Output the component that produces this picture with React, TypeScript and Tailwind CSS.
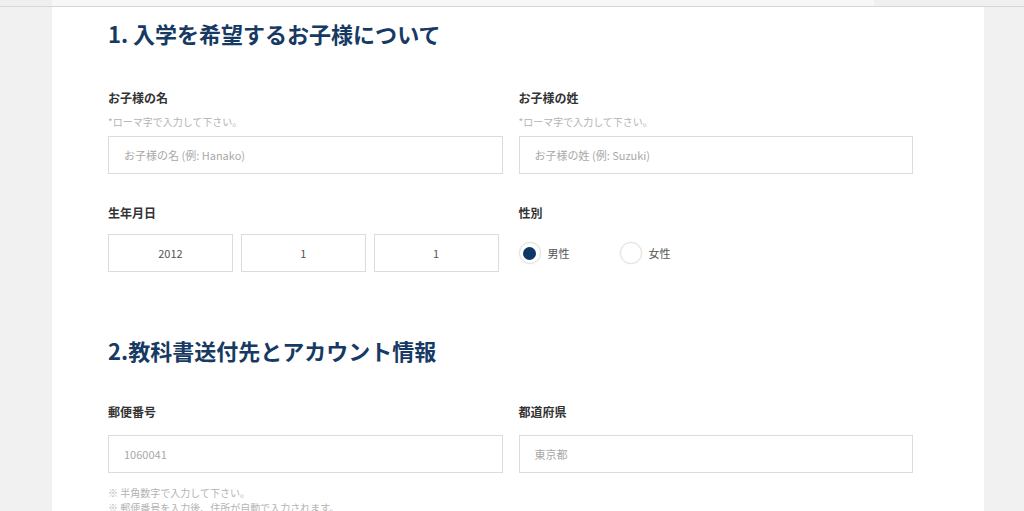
import React from 'react';

const font = { fontFamily: '"Noto Sans CJK JP", "Noto Sans", sans-serif' };

function TextField({ placeholder }: { placeholder: string }) {
  return (
    <div className="h-[38px] border border-[#dcdcdc] bg-white flex items-center px-[15px] text-[11px] text-[#a8a8a8]">
      {placeholder}
    </div>
  );
}

function Radio({ label, checked }: { label: string; checked?: boolean }) {
  return (
    <div className="flex items-center gap-[7px]">
      <span className="w-[22px] h-[22px] rounded-full border border-[#e2e2e2] bg-white shadow-[0_0_2px_rgba(0,0,0,0.08)] flex items-center justify-center">
        {checked && <span className="w-[13px] h-[13px] rounded-full bg-[#0e3767]" />}
      </span>
      <span className="text-[11px] text-[#555]">{label}</span>
    </div>
  );
}

export default function App() {
  return (
    <div className="w-[1024px] h-[511px] overflow-hidden bg-[#f1f1f1] flex flex-col" style={font}>
      <div className="h-[7px] shrink-0 bg-[#f7f7f7] border-b border-[#d6d6d6] flex">
        <div className="w-[52px] bg-[#efefef]" />
        <div className="flex-1" />
        <div className="w-[150px] bg-[#f0f0f0]" />
      </div>
      <div className="flex flex-1">
        <div className="ml-[52px] w-[932px] bg-white pl-[56px] pt-[11px]">
          <div className="w-[805px]">
            <h2 className="text-[22px] leading-[30px] font-bold text-[#163a63]">1. 入学を希望するお子様について</h2>

            <div className="grid grid-cols-2 gap-x-[16px] mt-[41px]">
              <div>
                <div className="text-[12px] leading-[18px] font-bold text-[#333]">お子様の名</div>
                <div className="text-[10px] leading-[14px] text-[#b3b3b3] mt-[8px]">*ローマ字で入力して下さい。</div>
                <div className="mt-[7px]">
                  <TextField placeholder="お子様の名 (例: Hanako)" />
                </div>
              </div>
              <div>
                <div className="text-[12px] leading-[18px] font-bold text-[#333]">お子様の姓</div>
                <div className="text-[10px] leading-[14px] text-[#b3b3b3] mt-[8px]">*ローマ字で入力して下さい。</div>
                <div className="mt-[7px]">
                  <TextField placeholder="お子様の姓 (例: Suzuki)" />
                </div>
              </div>
            </div>

            <div className="grid grid-cols-2 gap-x-[16px] mt-[30px]">
              <div>
                <div className="text-[12px] leading-[18px] font-bold text-[#333]">生年月日</div>
                <div className="grid grid-cols-3 gap-[8px] mt-[12px] pr-[4px]">
                  {['2012', '1', '1'].map((v, i) => (
                    <div
                      key={i}
                      className="h-[38px] border border-[#dcdcdc] flex items-center justify-center text-[11px] text-[#555]"
                    >
                      {v}
                    </div>
                  ))}
                </div>
              </div>
              <div>
                <div className="text-[12px] leading-[18px] font-bold text-[#333]">性別</div>
                <div className="flex items-center gap-[50px] h-[38px] mt-[12px]">
                  <Radio label="男性" checked />
                  <Radio label="女性" />
                </div>
              </div>
            </div>

            <h2 className="text-[22px] leading-[30px] font-bold text-[#163a63] mt-[63px]">2.教科書送付先とアカウント情報</h2>

            <div className="grid grid-cols-2 gap-x-[16px] mt-[38px]">
              <div>
                <div className="text-[12px] leading-[18px] font-bold text-[#333]">郵便番号</div>
                <div className="mt-[14px]">
                  <TextField placeholder="1060041" />
                </div>
                <div className="text-[10px] leading-[15px] text-[#b3b3b3] mt-[12px]">※ 半角数字で入力して下さい。</div>
                <div className="text-[10px] leading-[15px] text-[#b3b3b3]">※ 郵便番号を入力後、住所が自動で入力されます。</div>
              </div>
              <div>
                <div className="text-[12px] leading-[18px] font-bold text-[#333]">都道府県</div>
                <div className="mt-[14px]">
                  <TextField placeholder="東京都" />
                </div>
              </div>
            </div>
          </div>
        </div>
      </div>
    </div>
  );
}
